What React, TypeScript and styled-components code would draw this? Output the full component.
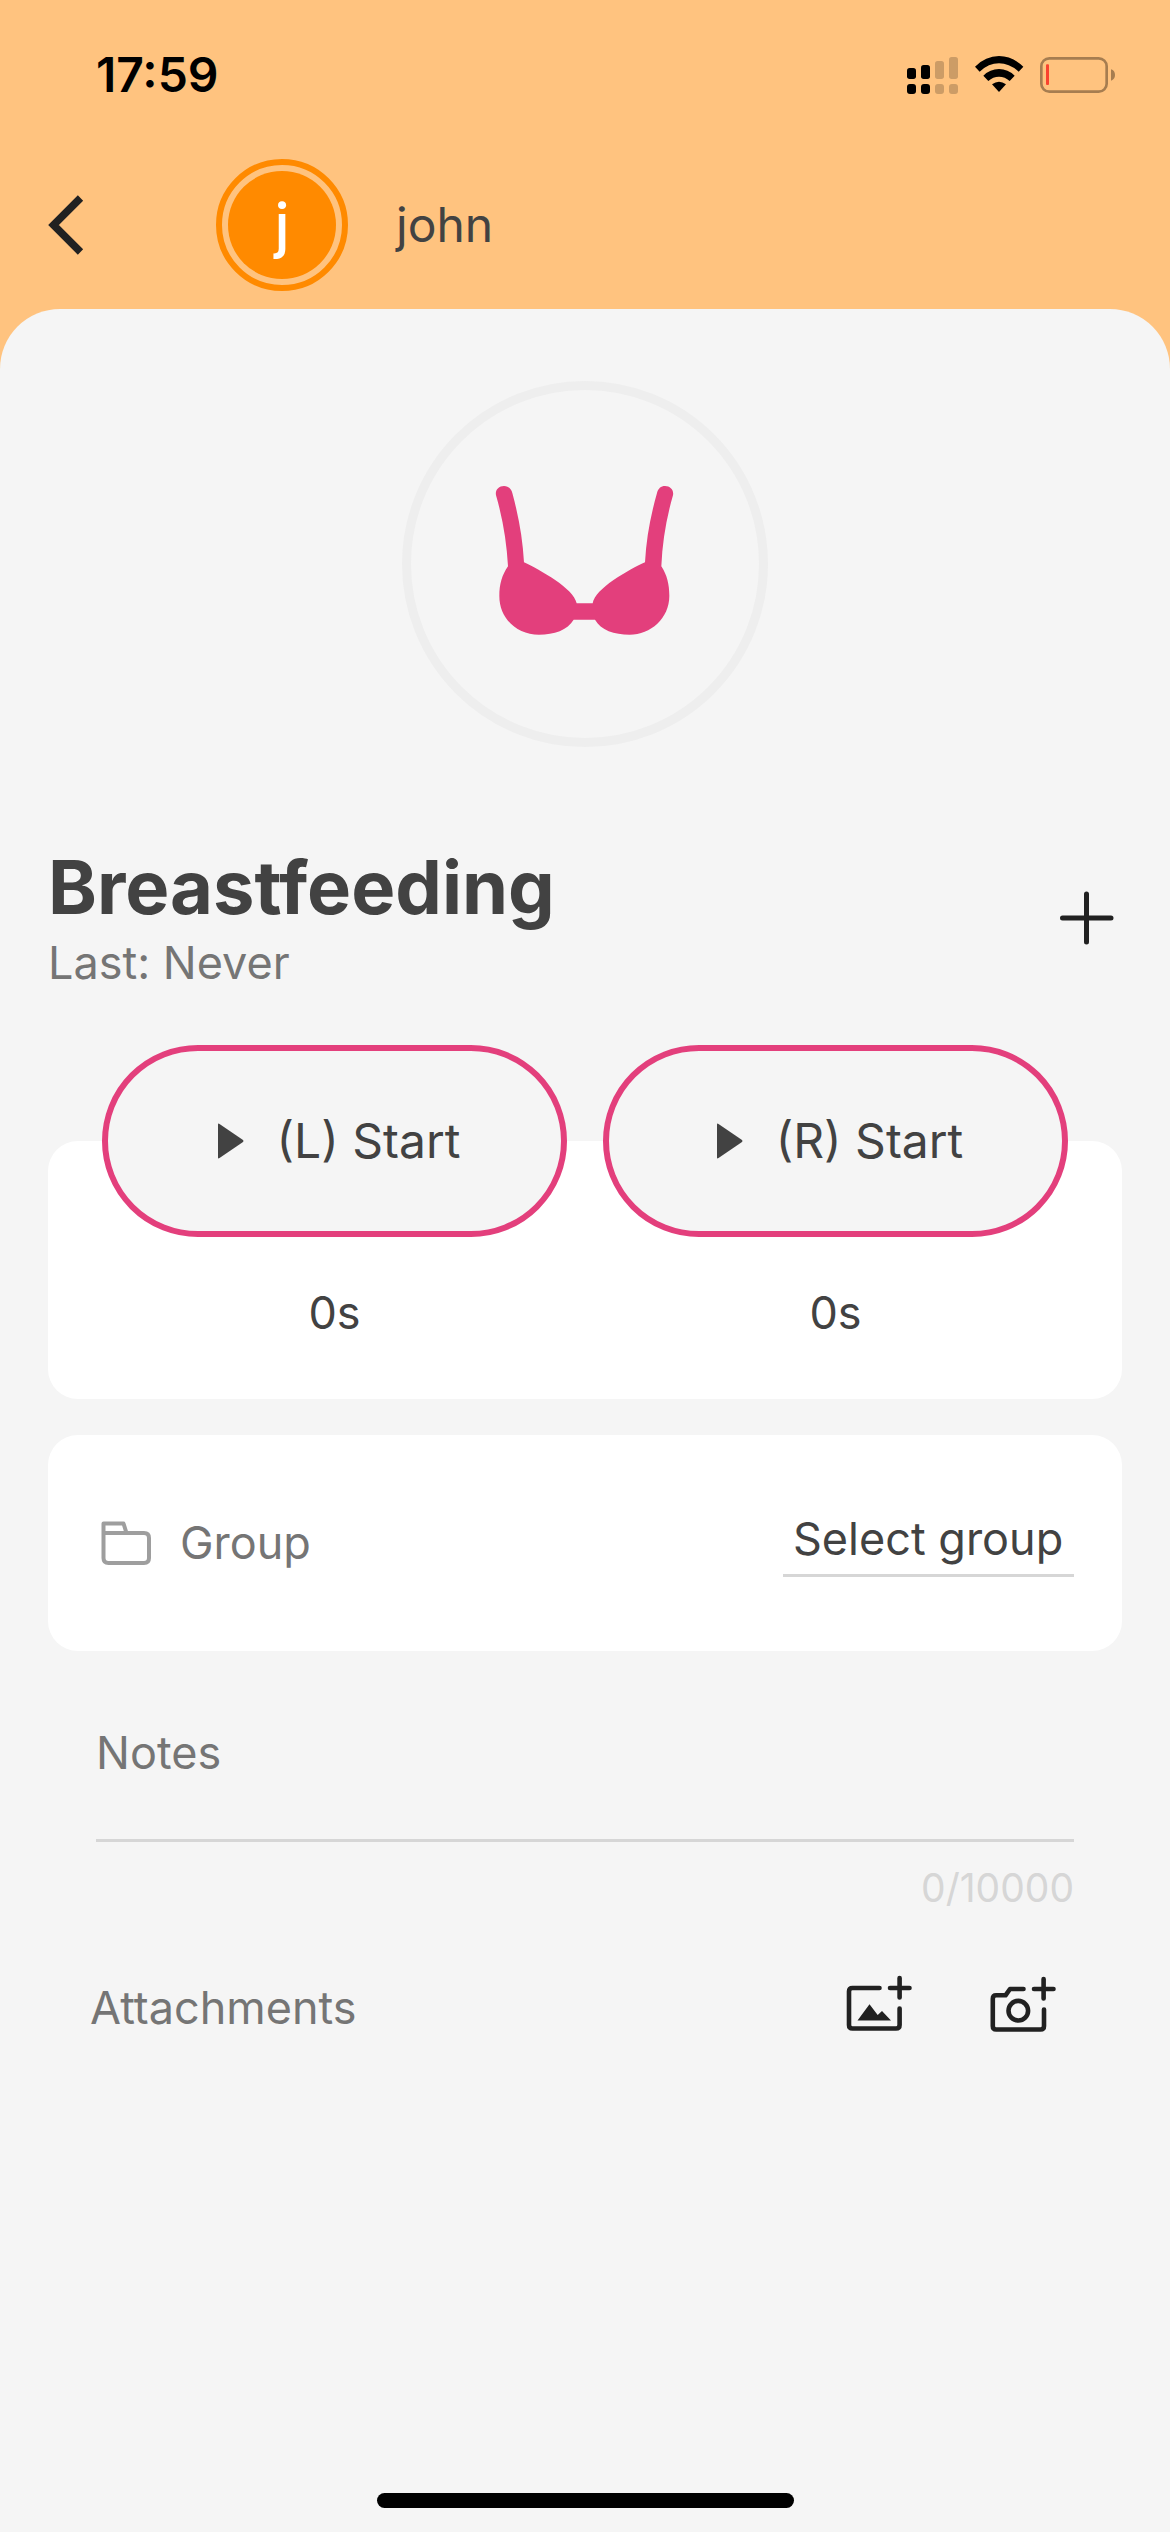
import React, { useState } from "react";
import styled, { createGlobalStyle } from "styled-components";

const color = {
  header: "#ffc37f",
  accent: "#ff8a00",
  pink: "#e33f7c",
  panel: "#f5f5f5",
  ring: "#eeeeee",
  text: "#424242",
  muted: "#757575",
  icon: "#212121",
  line: "#d6d6d6",
};

const MAX_NOTES = 10000;

const GlobalStyle = createGlobalStyle`
  *, *::before, *::after { box-sizing: border-box; }
  body {
    margin: 0;
    background: ${color.header};
    color: ${color.text};
    font-family: Inter, "Liberation Sans", sans-serif;
    font-size: 45px;
    line-height: 60px;
  }
  button, select, textarea {
    margin: 0;
    padding: 0;
    border: 0;
    background: none;
    color: inherit;
    font: inherit;
  }
  button { cursor: pointer; }
  svg { display: block; flex: none; }
`;

const Page = styled.div`
  display: flex;
  flex-direction: column;
  min-height: 100vh;
`;

const StatusBar = styled.div`
  display: flex;
  align-items: center;
  justify-content: space-between;
  padding: 45px 55px 36px 96px;
  color: #000;
`;

const Clock = styled.time`
  font-size: 48px;
  font-weight: 600;
`;

const StatusIcons = styled.div`
  display: flex;
  gap: 16px;
`;

const Header = styled.header`
  display: flex;
  align-items: center;
  gap: 48px;
  padding: 18px 48px;
`;

const BackButton = styled.button`
  width: 120px;
  color: ${color.icon};
`;

const Avatar = styled.div`
  width: 132px;
  height: 132px;
  padding: 6px;
  border: 6px solid ${color.accent};
  border-radius: 50%;
`;

const Initial = styled.div`
  display: flex;
  align-items: center;
  justify-content: center;
  height: 100%;
  border-radius: 50%;
  background: ${color.accent};
  color: #fff;
  font-size: 60px;
  font-weight: 500;
`;

const ProfileName = styled.span`
  font-size: 48px;
`;

const Main = styled.main`
  flex: 1;
  display: flex;
  flex-direction: column;
  padding: 72px 48px 24px;
  border-radius: 60px 60px 0 0;
  background: ${color.panel};
`;

const ActivityBadge = styled.div`
  align-self: center;
  border: 9px solid ${color.ring};
  border-radius: 50%;
`;

const TitleRow = styled.div`
  display: flex;
  align-items: center;
  justify-content: space-between;
  margin-top: 98px;
`;

const Title = styled.h1`
  margin: 0;
  font-size: 74px;
  font-weight: 700;
  line-height: 84px;
`;

const LastEntry = styled.p`
  margin: 4px 0 0;
  color: ${color.muted};
`;

const IconButton = styled.button`
  color: ${color.icon};
`;

const Card = styled.section`
  border-radius: 30px;
  background: #fff;
`;

const TimerCard = styled(Card)`
  display: grid;
  grid-template-columns: 1fr 1fr;
  gap: 36px;
  margin-top: 148px;
  padding: 0 54px 56px;
`;

const Timer = styled.div`
  display: flex;
  flex-direction: column;
  gap: 46px;
  margin-top: -96px;
  text-align: center;
`;

const StartButton = styled.button`
  display: flex;
  align-items: center;
  justify-content: center;
  gap: 32px;
  height: 192px;
  border: 6px solid ${color.pink};
  border-radius: 96px;
  background: ${color.panel};
  font-size: 48px;
`;

const GroupCard = styled(Card)`
  display: flex;
  align-items: center;
  justify-content: space-between;
  margin-top: 36px;
  padding: 74px 48px;
`;

const GroupLabel = styled.label`
  display: flex;
  align-items: center;
  gap: 24px;
  color: ${color.muted};
`;

const GroupSelect = styled.select`
  appearance: none;
  height: 68px;
  padding: 0 10px 6px;
  border-bottom: 3px solid ${color.line};
  border-radius: 0;
`;

const NotesField = styled.div`
  display: flex;
  flex-direction: column;
  gap: 22px;
  margin-top: 72px;
  padding: 0 48px;
`;

const NotesInput = styled.textarea`
  display: block;
  width: 100%;
  height: 119px;
  border-bottom: 3px solid ${color.line};
  border-radius: 0;
  resize: none;
  overflow: hidden;
  &::placeholder {
    color: ${color.muted};
    opacity: 1;
  }
`;

const Counter = styled.span`
  align-self: flex-end;
  color: ${color.line};
  font-size: 39px;
  line-height: 48px;
`;

const Attachments = styled.div`
  display: flex;
  align-items: center;
  justify-content: space-between;
  margin-top: 60px;
  padding: 0 64px 0 42px;
  color: ${color.muted};
`;

const AttachmentActions = styled.div`
  display: flex;
  gap: 72px;
`;

const HomeIndicator = styled.div`
  align-self: center;
  width: 417px;
  max-width: 60%;
  height: 15px;
  margin-top: auto;
  border-radius: 8px;
  background: #000;
`;

const SignalIcon = () => (
  <svg width="52" height="39" viewBox="111 75 156 117" aria-hidden="true">
    <rect x="111" y="111" width="27" height="33" rx="8" />
    <rect x="153" y="102" width="27" height="42" rx="8" />
    <rect x="111" y="159" width="27" height="30" rx="9" />
    <rect x="153" y="159" width="27" height="30" rx="9" />
    <g fill="#cc9c66">
      <rect x="195" y="90" width="27" height="54" rx="8" />
      <rect x="237" y="78" width="27" height="66" rx="8" />
      <rect x="195" y="159" width="27" height="30" rx="9" />
      <rect x="237" y="159" width="27" height="30" rx="9" />
    </g>
  </svg>
);

const WifiIcon = () => (
  <svg width="49" height="39" viewBox="315 75 147 117" aria-hidden="true">
    <path d="M315 107Q347 75 387 75T460 107L446 122Q418 97 387 97T329 122Z" />
    <path d="M340 134Q360 114 387 114T434 134L419 150Q405 137 387 137T355 150Z" />
    <path d="M366 160Q387 144 408 160L387 183Z" />
  </svg>
);

const BatteryIcon = () => (
  <svg width="75" height="39" viewBox="510 75 225 117" aria-hidden="true">
    <rect x="514" y="82" width="196" height="100" rx="24" fill="none" stroke="#a67d50" strokeWidth="8" />
    <path d="M723 115Q735 119 735 132T723 149Z" fill="#a67d50" />
    <rect x="528" y="100" width="9" height="62" rx="3" fill="#f9432f" />
  </svg>
);

const BackIcon = () => (
  <svg width="36" height="60" viewBox="0 0 36 60" fill="none" stroke="currentColor" strokeWidth="7.500" aria-hidden="true">
    <path d="M32.500 3L5.500 30L32.500 57" />
  </svg>
);

const BraIcon = () => (
  <svg width="348" height="348" viewBox="63 60 1044 1044" fill={color.pink} aria-hidden="true">
    <path d="M318 376C315 360 326 348 342 348C355 348 364 356 367 369C386 440 398 505 402 577C450 600 551 655 560 700H608C616 655 715 600 765 577C769 505 781 440 801 369C804 356 813 348 825 348C841 348 852 360 849 376C829 445 817 515 814 589C831 615 838 643 838 678C838 745 782 794 719 794C673 794 632 780 615 749H551C533 780 492 794 447 794C380 794 328 745 328 678C328 643 336 615 354 589C350 515 338 445 318 376Z" />
  </svg>
);

const PlusIcon = () => (
  <svg width="72" height="72" viewBox="0 0 72 72" fill="none" stroke="currentColor" strokeWidth="5" strokeLinecap="round" aria-hidden="true">
    <path d="M36.500 11V59M12.500 35H61" />
  </svg>
);

const PlayIcon = () => (
  <svg width="36" height="36" viewBox="0 0 36 36" fill="currentColor" aria-hidden="true">
    <path d="M9 1.500Q9 0 10.500 1L34 17Q35 18 34 19L10.500 35Q9 36 9 34.500Z" />
  </svg>
);

const FolderIcon = () => (
  <svg width="60" height="60" viewBox="0 0 60 60" fill="none" stroke="#9e9e9e" strokeWidth="4" strokeLinejoin="round" aria-hidden="true">
    <path d="M7.500 20H48Q53 20 53 25V45Q53 50 48 50H12.500Q7.500 50 7.500 45V10.500H27.500L30.500 20" />
  </svg>
);

const AddImageIcon = () => (
  <svg width="72" height="72" viewBox="0 4 72 72" fill="none" stroke="currentColor" strokeWidth="4.600" strokeLinecap="round" aria-hidden="true">
    <path d="M37.500 20H10.500Q7 20 7 23.500V57Q7 60.500 10.500 60.500H54Q57.600 60.500 57.600 57V40.500" />
    <path d="M57.600 10V29.500M48 20H67.500" />
    <path d="M15.500 52.500L27.500 36.300L35.700 47L40 43L49 52.500Z" fill="currentColor" stroke="none" />
  </svg>
);

const AddPhotoIcon = () => (
  <svg width="72" height="72" viewBox="0 4 72 72" fill="none" stroke="currentColor" strokeWidth="4.600" strokeLinecap="round" strokeLinejoin="round" aria-hidden="true">
    <path d="M37.500 21H24L19.500 27.300H10.200Q6.800 27.300 6.800 30.800V58Q6.800 61.500 10.200 61.500H54.500Q58 61.500 58 58V41.500" />
    <path d="M57.600 11V30.500M48 21H67.500" />
    <circle cx="32.300" cy="42.700" r="9.800" />
  </svg>
);

const sides = ["L", "R"];

export default function App() {
  const [notes, setNotes] = useState("");

  return (
    <>
      <GlobalStyle />
      <Page>
        <StatusBar>
          <Clock>17:59</Clock>
          <StatusIcons>
            <SignalIcon />
            <WifiIcon />
            <BatteryIcon />
          </StatusIcons>
        </StatusBar>

        <Header>
          <BackButton type="button" aria-label="Back">
            <BackIcon />
          </BackButton>
          <Avatar>
            <Initial>j</Initial>
          </Avatar>
          <ProfileName>john</ProfileName>
        </Header>

        <Main>
          <ActivityBadge>
            <BraIcon />
          </ActivityBadge>

          <TitleRow>
            <div>
              <Title>Breastfeeding</Title>
              <LastEntry>Last: Never</LastEntry>
            </div>
            <IconButton type="button" aria-label="Add entry">
              <PlusIcon />
            </IconButton>
          </TitleRow>

          <TimerCard>
            {sides.map((side) => (
              <Timer key={side}>
                <StartButton type="button">
                  <PlayIcon />
                  <span>({side}) Start</span>
                </StartButton>
                <span>0s</span>
              </Timer>
            ))}
          </TimerCard>

          <GroupCard>
            <GroupLabel htmlFor="group">
              <FolderIcon />
              Group
            </GroupLabel>
            <GroupSelect id="group">
              <option>Select group</option>
            </GroupSelect>
          </GroupCard>

          <NotesField>
            <NotesInput
              aria-label="Notes"
              placeholder="Notes"
              maxLength={MAX_NOTES}
              value={notes}
              onChange={(event) => setNotes(event.target.value)}
            />
            <Counter>{`${notes.length}/${MAX_NOTES}`}</Counter>
          </NotesField>

          <Attachments>
            <span>Attachments</span>
            <AttachmentActions>
              <IconButton type="button" aria-label="Add image">
                <AddImageIcon />
              </IconButton>
              <IconButton type="button" aria-label="Take photo">
                <AddPhotoIcon />
              </IconButton>
            </AttachmentActions>
          </Attachments>

          <HomeIndicator />
        </Main>
      </Page>
    </>
  );
}
